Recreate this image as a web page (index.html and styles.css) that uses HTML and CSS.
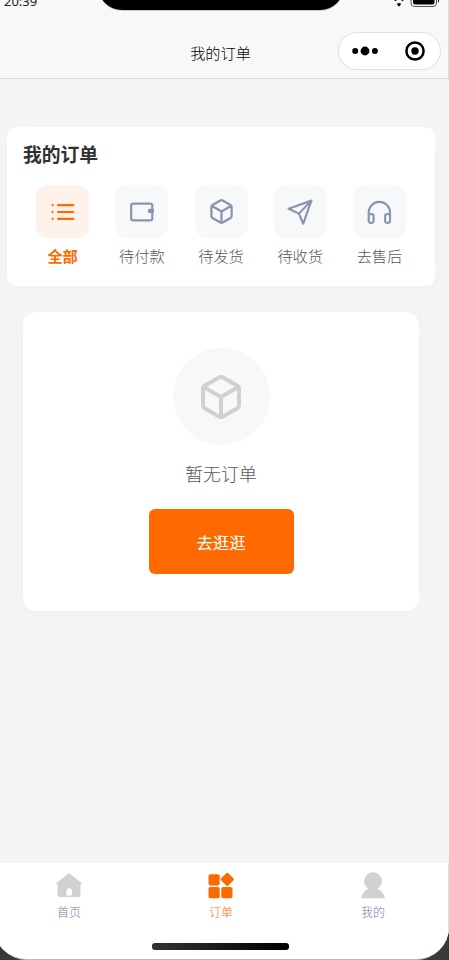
FILE: index.html
```html
<!DOCTYPE html>
<html lang="zh-CN">
<head>
<meta charset="utf-8">
<title>我的订单</title>
<link rel="stylesheet" href="styles.css">
</head>
<body>
<div class="screen">
  <header class="header">
    <div class="notch"></div>
    <div class="status">
      <span class="time">20:39</span>
      <svg class="signal" width="50" height="14" viewBox="0 0 50 14">
        <path d="M2.600 4.400Q7 .8 11.400 4.400" fill="none" stroke="#000" stroke-width="2"/>
        <path d="M4.800 8Q7 6.200 9.200 8L7 10.800Z"/>
        <rect x="19" y="-4" width="25.500" height="14.500" rx="3.500" fill="none" stroke="#555"/>
        <rect x="21" y="-3" width="21.500" height="11.500" rx="2"/>
        <path d="M46 2.500Q48 4 46 7Z"/>
      </svg>
    </div>
    <h1 class="title">我的订单</h1>
    <div class="capsule">
      <svg width="26" height="10" viewBox="0 0 26 10"><circle cx="3.200" cy="5" r="3"/><circle cx="13" cy="5" r="4.400"/><circle cx="22.900" cy="5" r="3"/></svg>
      <svg width="20" height="20" viewBox="0 0 20 20"><circle cx="10" cy="10" r="8.600" fill="none" stroke="#000" stroke-width="2.500"/><circle cx="10" cy="10" r="3.700"/></svg>
    </div>
  </header>

  <main class="page">
    <section class="orders">
      <h2>我的订单</h2>
      <nav class="kinds">
        <a class="kind active"><span class="box"><svg viewBox="0 0 24 24"><path d="M7.400 5.700h14.200M7.400 12h14.200M7.400 18.300h14.200M2.300 5.700h.1M2.300 12h.1M2.300 18.300h.1"/></svg></span>全部</a>
        <a class="kind"><span class="box"><svg viewBox="0 0 24 24"><rect x="2" y="4.200" width="19.500" height="15.500" rx="2"/><path d="M19 9h4v4h-4a1.500 1.500 0 0 1-1.500-1.500v-1A1.500 1.500 0 0 1 19 9z" fill="currentColor" stroke="none"/></svg></span>待付款</a>
        <a class="kind"><span class="box"><svg class="cube" viewBox="0 0 24 24"><path d="M21 16V8a2 2 0 0 0-1-1.730l-7-4a2 2 0 0 0-2 0l-7 4A2 2 0 0 0 3 8v8a2 2 0 0 0 1 1.730l7 4a2 2 0 0 0 2 0l7-4A2 2 0 0 0 21 16zM3.270 6.960L12 12l8.730-5.040M12 22V12"/></svg></span>待发货</a>
        <a class="kind"><span class="box"><svg viewBox="0 0 24 24"><path d="M22.500 1.500L15 22.800l-4-9.300L1.500 9zM22.500 1.500L11 13.500"/></svg></span>待收货</a>
        <a class="kind"><span class="box"><svg viewBox="0 0 24 24"><path d="M2.500 19v-6.500a9.850 9.850 0 0 1 19.700 0V19M2.500 14h2.700a1.800 1.800 0 0 1 1.800 1.800v4.400A1.800 1.800 0 0 1 5.200 22h-.9a1.800 1.800 0 0 1-1.800-1.800zM22.200 14h-2.700a1.800 1.800 0 0 0-1.800 1.800v4.400a1.800 1.800 0 0 0 1.800 1.800h.9a1.800 1.800 0 0 0 1.800-1.800z"/></svg></span>去售后</a>
      </nav>
    </section>

    <section class="empty">
      <div class="disc"><svg viewBox="0 0 24 24"><path d="M21 16V8a2 2 0 0 0-1-1.730l-7-4a2 2 0 0 0-2 0l-7 4A2 2 0 0 0 3 8v8a2 2 0 0 0 1 1.730l7 4a2 2 0 0 0 2 0l7-4A2 2 0 0 0 21 16zM3.270 6.960L12 12l8.730-5.040M12 22V12"/></svg></div>
      <p>暂无订单</p>
      <a class="button">去逛逛</a>
    </section>
  </main>

  <footer class="tabbar">
    <a class="tab"><svg width="30" height="30" viewBox="0 0 30 30"><path d="M13.400 4.200Q15 3 16.600 4.200L27.500 13Q28.600 14.200 27 14.500H26.500V24.500Q26.500 27 24 27H18V21a2.800 2.800 0 0 0-5.600 0V25.500H18V27H6Q3.500 27 3.500 24.500V14.500H3Q1.400 14.200 2.500 13Z"/></svg>首页</a>
    <a class="tab active"><svg width="30" height="30" viewBox="0 0 30 30"><rect x="2.500" y="4.200" width="11.200" height="11.200" rx="2"/><rect x="2.500" y="17" width="11.200" height="11.200" rx="2"/><rect x="15.300" y="17" width="11.200" height="11.200" rx="2"/><rect x="16.200" y="4.300" width="10.200" height="10.200" rx="1.500" transform="rotate(45 21.300 9.400)"/></svg>订单</a>
    <a class="tab"><svg width="30" height="30" viewBox="0 0 30 30"><path d="M10.500 18.500a8.800 8.800 0 1 1 9 0Q25.500 21.500 27 28.200H3Q4.500 21.500 10.500 18.500Z"/></svg>我的</a>
    <div class="home-bar"></div>
  </footer>
</div>
</body>
</html>
```
FILE: styles.css
```css
* { box-sizing: border-box; }

html, body { height: 100%; overflow: hidden; }

body {
  margin: 0;
  background: #38393b;
  font-family: "Noto Sans CJK SC", sans-serif;
  font-weight: 300;
}

h1, h2, p { margin: 0; }

/* The device screen runs slightly past the left edge of the window. */
.screen {
  display: flex;
  flex-direction: column;
  width: 455px;
  height: 960px;
  margin-left: -6px;
  padding-left: 6px;
  overflow: hidden;
  background: #f4f5f7;
  border-bottom: 1px solid #bbb;
  border-radius: 0 0 33px 33px;
}

.header {
  position: relative;
  height: 79px;
  flex: none;
  background: #f8f8f8;
  border-bottom: 1px solid #dedede;
  border-right: 1px solid #ddd;
}

.notch {
  position: absolute;
  left: 98px;
  top: -25px;
  width: 246px;
  height: 35px;
  border-radius: 0 0 24px 24px;
  background: #000;
  box-shadow: 0 1px 0 #ccc;
}

.status {
  display: flex;
  justify-content: space-between;
  height: 28px;
  padding: 0 0 0 4px;
}

.time {
  font: 13px/20px "Noto Sans", sans-serif;
  margin-top: -9px;
  color: #222;
}

.signal { margin: -4px 6px 0 0; width: 50px; }

.title {
  width: 441px;
  padding-top: 13px;
  font-size: 15.200px;
  line-height: 22px;
  font-weight: 300;
  text-align: center;
  color: #000;
}

.capsule {
  position: absolute;
  left: 338px;
  top: 32px;
  width: 103px;
  height: 38px;
  padding: 0 15px 1px 13px;
  display: flex;
  align-items: center;
  justify-content: space-between;
  background: #fff;
  border: 1px solid #dfdfdf;
  border-radius: 19px;
}

.page { flex: 1; padding: 48px 14px 0 7px; }

.orders {
  height: 159px;
  padding: 16px 16px 0;
  background: #fff;
  border-radius: 9px;
  box-shadow: 0 2px 12px rgba(0, 0, 0, .025);
}

.orders h2 {
  font-size: 18.800px;
  line-height: 22px;
  font-weight: 700;
  color: #303133;
}

.kinds { display: flex; margin-top: 20px; }

.kind {
  flex: 1;
  display: flex;
  flex-direction: column;
  align-items: center;
  gap: 6px;
  font-size: 15.200px;
  line-height: 22px;
  color: #55575b;
}

.box {
  display: grid;
  place-items: center;
  width: 53px;
  height: 53px;
  border-radius: 12px;
  background: #f7f8fa;
  color: #8a94ab;
}

.kind svg, .disc svg {
  width: 26px;
  height: 26px;
  fill: none;
  stroke: currentColor;
  stroke-width: 2;
  stroke-linecap: round;
  stroke-linejoin: round;
}

.kind .cube { width: 27px; height: 27px; }

.kind.active { color: #ff6a00; font-weight: 700; }
.kind.active .box { background: #fff2ea; color: #ff6a00; }

.empty {
  display: flex;
  flex-direction: column;
  align-items: center;
  height: 299px;
  margin: 26px 16px 0;
  padding-top: 36px;
  background: #fff;
  border-radius: 13px;
  box-shadow: 0 2px 12px rgba(0, 0, 0, .025);
}

.disc {
  display: grid;
  place-items: center;
  width: 97px;
  height: 97px;
  border-radius: 50%;
  background: #f7f8fa;
  color: #d1d1d1;
}

.disc svg { width: 48px; height: 48px; }

.empty p {
  margin-top: 15px;
  font-size: 17.900px;
  line-height: 26px;
  color: #55575b;
}

.button {
  width: 145px;
  height: 65px;
  margin-top: 23px;
  border-radius: 6px;
  background: #ff6a00;
  color: #fff;
  font-size: 16.400px;
  line-height: 66px;
  font-weight: 400;
  text-align: center;
}

.tabbar {
  position: relative;
  display: flex;
  flex: none;
  height: 96px;
  margin-left: -7px;
  padding-top: 7px;
  background: #fff;
  border-right: 1px solid #ddd;
}

.tab {
  flex: 0 0 152px;
  display: flex;
  flex-direction: column;
  align-items: center;
  gap: 3px;
  font-size: 12px;
  line-height: 18px;
  color: #7482a0;
}

.tab svg { fill: #d1d1d1; }
.tab.active { color: #ff6a00; }
.tab.active svg { fill: #ff6a00; }

.home-bar {
  position: absolute;
  left: 159px;
  top: 80px;
  width: 137px;
  height: 7px;
  border-radius: 3px;
  background: linear-gradient(90deg, #333, #000);
}
```
